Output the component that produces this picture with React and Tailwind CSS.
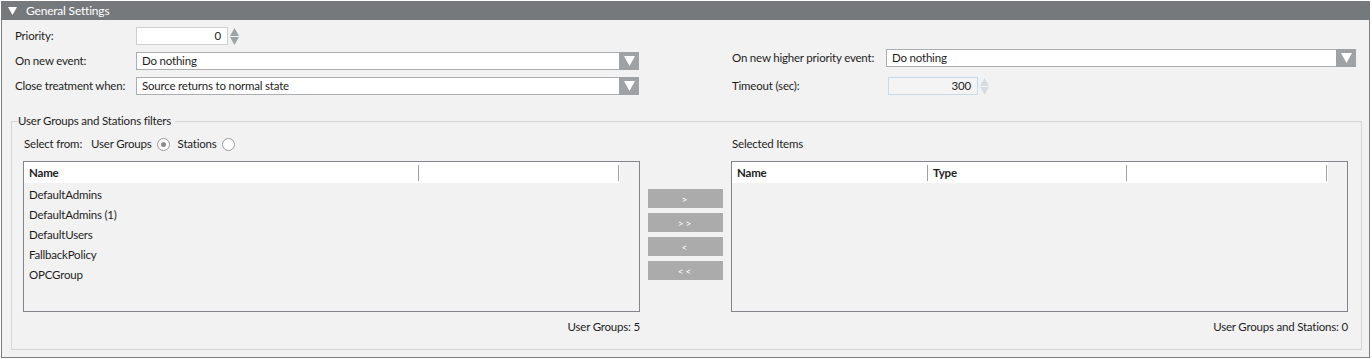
import React from 'react';

const font = { fontFamily: 'Lato, "Segoe UI", "Noto Sans", sans-serif' };

const Spinner = ({ disabled }) => (
  <div className="flex flex-col items-center justify-center ml-[1px] w-[10px]">
    <svg width="9" height="8" viewBox="0 0 9 8">
      <path d="M4.5 0 L9 8 L0 8 Z" fill={disabled ? '#d5dde3' : '#9ea3a6'} />
    </svg>
    <svg width="9" height="8" viewBox="0 0 9 8" className="mt-[1px]">
      <path d="M0 0 L9 0 L4.5 8 Z" fill={disabled ? '#d5dde3' : '#9ea3a6'} />
    </svg>
  </div>
);

const Dropdown = ({ value, width }) => (
  <div className={`flex h-[18px] ${width} border border-[#acadb0] bg-white`}>
    <div className="flex-1 px-[5px] leading-[16px] text-[#1e1e1e] truncate">{value}</div>
    <div className="w-[20px] bg-[#9ea2a5] flex items-center justify-center -my-[1px] -mr-[1px]">
      <svg width="11" height="10" viewBox="0 0 11 10">
        <path d="M0 0 L11 0 L5.5 10 Z" fill="#ffffff" />
      </svg>
    </div>
  </div>
);

const Radio = ({ checked }) => (
  <span className="flex items-center justify-center w-[13px] h-[13px] rounded-full border border-[#9a9a9a] bg-white">
    {checked && <span className="w-[5px] h-[5px] rounded-full bg-[#8c8c8c]" />}
  </span>
);

const ListBox = ({ columns, rows }) => (
  <div className="h-[151px] border border-[#82868b] bg-[#f2f2f2] overflow-hidden">
    <div className="flex h-[21px] items-center bg-white mr-[19px]">
      {columns.map((c, i) => (
        <div
          key={i}
          className="h-[16px] border-r border-[#a0a0a0] flex items-center px-[5px] font-bold text-[#1e1e1e] whitespace-nowrap"
          style={{ width: c.w }}
        >
          {c.label}
        </div>
      ))}
    </div>
    <div className="pt-[2px]">
      {rows.map((r) => (
        <div key={r} className="h-[20px] flex items-center px-[5px] text-[#1e1e1e]">
          {r}
        </div>
      ))}
    </div>
  </div>
);

const ArrowButton = ({ label }) => (
  <div className="h-[19px] w-[75px] bg-[#ababab] text-white text-[10px] flex items-center justify-center tracking-[2px]">
    {label}
  </div>
);

export default function App() {
  return (
    <div className="w-[1372px] h-[359px] bg-white text-[11.5px] tracking-[-0.2px]" style={font}>
      <div className="ml-[1px] mt-[1px] w-[1369px] h-[357px] border border-[#7b7e81] bg-[#f2f2f2] flex flex-col">
        <div className="h-[19px] -mt-[1px] -mx-[1px] bg-[#76797c] flex items-center pl-[7px] text-white text-[12px] leading-[16px] whitespace-nowrap">
          <svg width="9" height="8" viewBox="0 0 9 8" className="mr-[9px]">
            <path d="M0 0 L9 0 L4.5 8 Z" fill="#ffffff" />
          </svg>
          General Settings
        </div>

        {/* top settings */}
        <div className="flex pl-[13px] pt-[7px] leading-[16px] text-[#1e1e1e] whitespace-nowrap">
          <div className="w-[624px] flex flex-col">
            <div className="flex items-center h-[18px]">
              <div className="w-[121px]">Priority:</div>
              <div className="w-[92px] h-[18px] border border-[#cfcfcf] bg-white text-right pr-[6px] leading-[16px]">0</div>
              <Spinner />
            </div>
            <div className="flex items-center mt-[7px]">
              <div className="w-[121px]">On new event:</div>
              <Dropdown value="Do nothing" width="w-[503px]" />
            </div>
            <div className="flex items-center mt-[7px]">
              <div className="w-[121px]">Close treatment when:</div>
              <Dropdown value="Source returns to normal state" width="w-[503px]" />
            </div>
          </div>
          <div className="ml-[93px] w-[624px] flex flex-col">
            <div className="flex items-center mt-[22px]">
              <div className="w-[154px]">On new higher priority event:</div>
              <Dropdown value="Do nothing" width="w-[470px]" />
            </div>
            <div className="flex items-center mt-[10px] h-[18px]">
              <div className="w-[156px]">Timeout (sec):</div>
              <div className="w-[90px] h-[18px] border border-[#c7dae8] bg-[#f4f4f4] text-right pr-[6px] leading-[16px]">300</div>
              <Spinner disabled />
            </div>
          </div>
        </div>

        {/* filters group */}
        <fieldset className="mt-[19px] ml-[9px] w-[1351px] h-[236px] border border-[#d5d5d5] px-[11px] pb-0 pt-0 leading-[16px] text-[#1e1e1e] whitespace-nowrap">
          <legend className="ml-[-5px] pr-[4px] leading-[14px]">User Groups and Stations filters</legend>
          <div className="flex mt-[7px]">
            <div className="w-[617px] flex flex-col">
              <div className="flex items-center h-[18px] pl-[1px]">
                <span>Select from:</span>
                <span className="ml-[9px]">User Groups</span>
                <span className="ml-[5px]"><Radio checked /></span>
                <span className="ml-[8px]">Stations</span>
                <span className="ml-[5px]"><Radio /></span>
              </div>
              <div className="mt-[8px]">
                <ListBox
                  columns={[
                    { label: 'Name', w: 395 },
                    { label: '', w: 200 },
                  ]}
                  rows={['DefaultAdmins', 'DefaultAdmins (1)', 'DefaultUsers', 'FallbackPolicy', 'OPCGroup']}
                />
              </div>
              <div className="text-right mt-[7px] leading-[16px]">User Groups: 5</div>
            </div>
            <div className="w-[75px] mx-[8px] flex flex-col gap-[5px] pt-[54px]">
              <ArrowButton label=">" />
              <ArrowButton label=">>" />
              <ArrowButton label="<" />
              <ArrowButton label="<<" />
            </div>
            <div className="w-[617px] flex flex-col">
              <div className="flex items-center h-[18px] pl-[1px]">Selected Items</div>
              <div className="mt-[8px]">
                <ListBox
                  columns={[
                    { label: 'Name', w: 196 },
                    { label: 'Type', w: 199 },
                    { label: '', w: 200 },
                  ]}
                  rows={[]}
                />
              </div>
              <div className="text-right mt-[7px] leading-[16px]">User Groups and Stations: 0</div>
            </div>
          </div>
        </fieldset>
      </div>
    </div>
  );
}
